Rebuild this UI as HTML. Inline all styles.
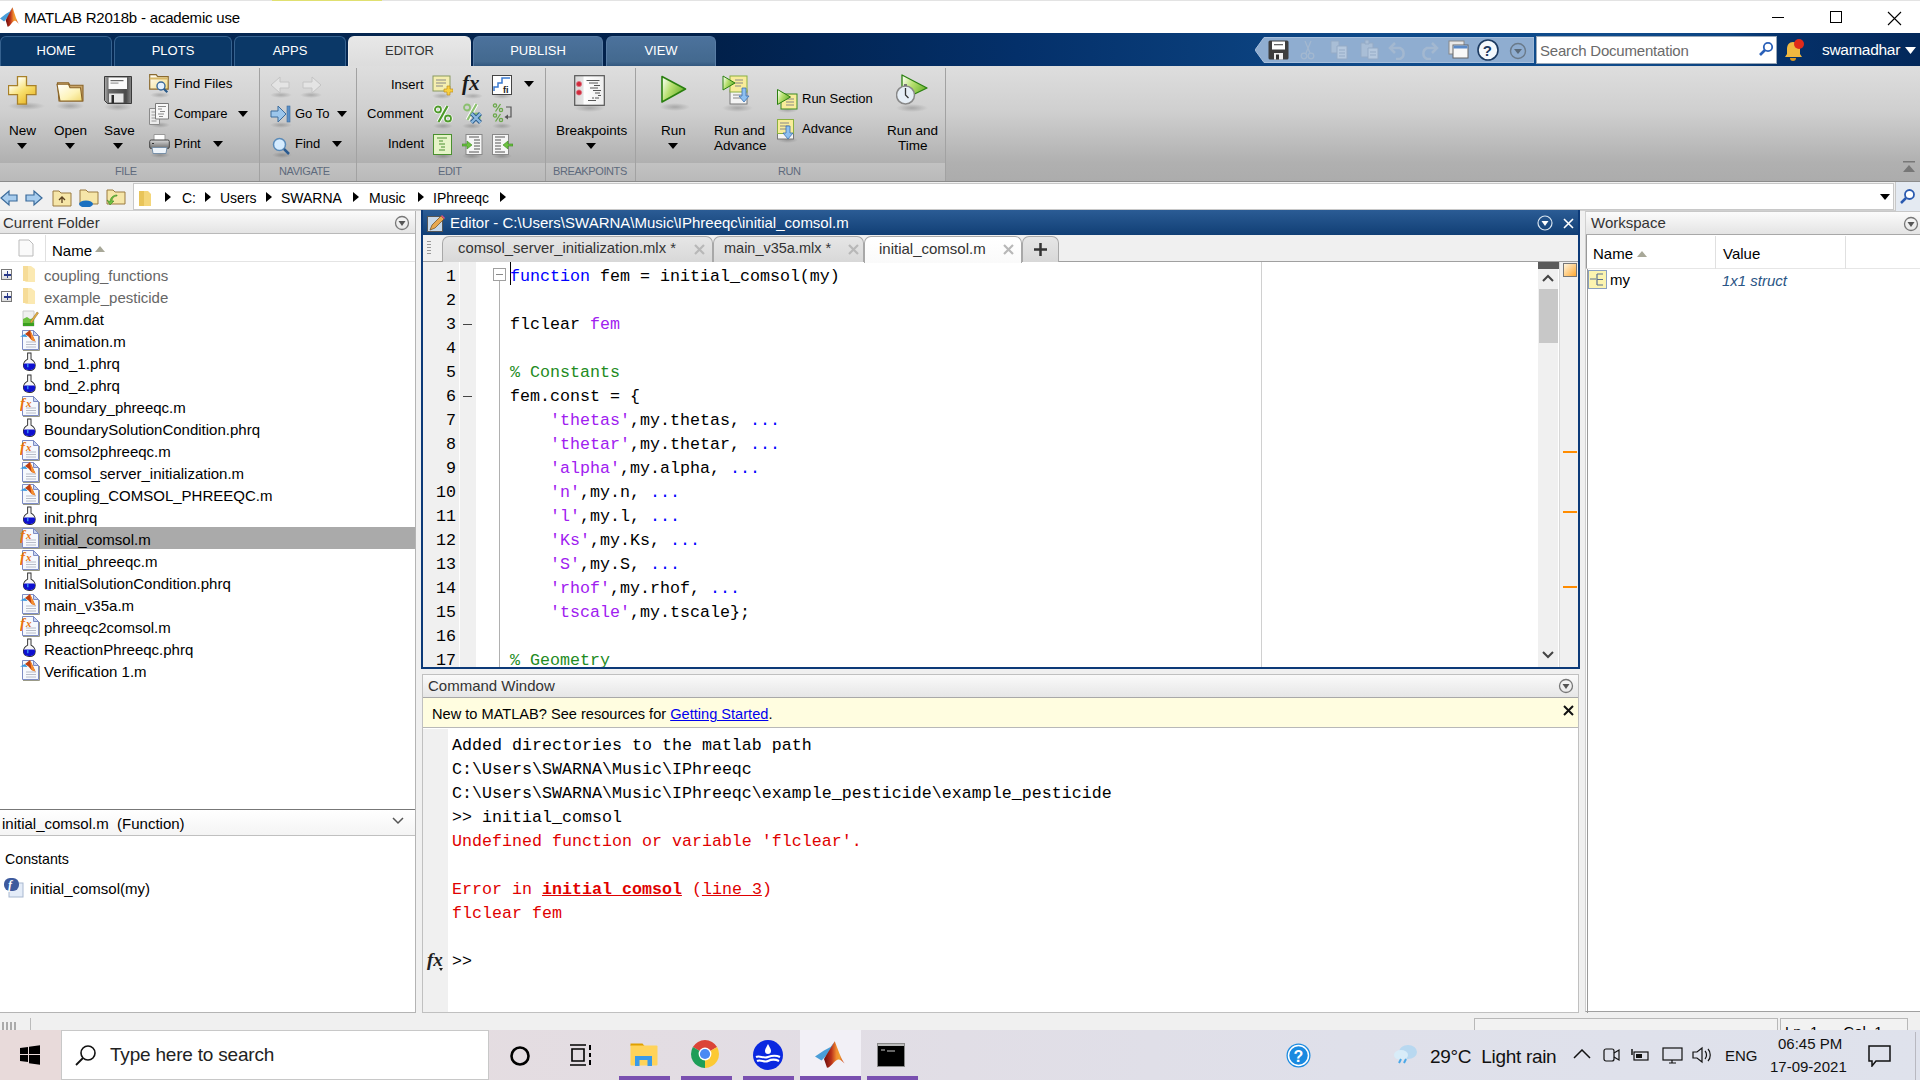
<!DOCTYPE html>
<html><head><meta charset="utf-8">
<style>
*{margin:0;padding:0;box-sizing:border-box}
html,body{width:1920px;height:1080px;overflow:hidden;background:#f0f0f0;font-family:"Liberation Sans",sans-serif;color:#000}
.a{position:absolute}
.t{position:absolute;white-space:pre;line-height:1}
.mono{font-family:"Liberation Mono",monospace}
/* title */
#title{left:0;top:0;width:1920px;height:33px;background:#fff;border-top:1px solid #e3e3e3}
/* tabbar */
#tabbar{left:0;top:33px;width:1920px;height:33px;background:linear-gradient(90deg,#062a56 0%,#04254f 20%,#01204a 37%,#04306a 53%,#093c78 62%,#0e4a8a 72%,#0f4b8b 84%,#0c4482 90%,#05316a 92.5%,#03285a 100%)}
.tab{position:absolute;top:3px;height:30px;background:#0b3867;border:1px solid #36628f;border-bottom:none;border-radius:6px 6px 0 0;color:#fff;font-size:13px;text-align:center;line-height:27px}
.tab.l{background:linear-gradient(#4c729c 0%,#43698f 85%,#33587f 100%);border-color:#587ca4}
.tab.sel{background:linear-gradient(#e8e8e8,#dcdcdc);border-color:#ececec;color:#333;height:31px}
/* ribbon */
#ribbon{left:0;top:66px;width:1920px;height:116px;background:linear-gradient(#dedede 0%,#cfcfcf 40%,#b0b0b0 84%,#acacac 100%);border-bottom:1px solid #8c8c8c}
.rl{position:absolute;font-size:13px;color:#000;white-space:pre;line-height:1}
.gl{position:absolute;top:100px;font-size:11px;letter-spacing:-0.4px;color:#5e6a7c;white-space:pre;line-height:1}
.strip{position:absolute;top:97px;height:18px;background:linear-gradient(#c2c2c2,#b9b9b9)}
.sep{position:absolute;top:2px;width:1px;height:113px;background:#a2a2a2}
.sh{position:absolute;border-radius:50%;background:radial-gradient(closest-side,rgba(0,0,0,.2),rgba(0,0,0,0))}
.dd{position:absolute;width:0;height:0;border-left:5px solid transparent;border-right:5px solid transparent;border-top:6px solid #000}
/* address */
#addr{left:0;top:182px;width:1920px;height:29px;background:#f0f0f0;border-bottom:1px solid #cfcfcf}
/* panels */
.hdr{position:absolute;height:22px;background:linear-gradient(#fbfbfb,#e4e4e4);border-bottom:1px solid #b9b9b9;font-size:15px;color:#333;line-height:22px}
.fl{position:absolute;left:44px;font-size:15px;white-space:pre;line-height:22px;height:22px}
</style></head><body>

<!-- TITLE BAR -->
<div id="title" class="a">
  <div class="a" style="left:272px;top:-1px;width:110px;height:1px;background:#e0e070"></div>
  <svg class="a" style="left:0px;top:6px" width="19" height="20" viewBox="0 0 30 27" preserveAspectRatio="none"><defs><linearGradient id="mlg2" x1="0" y1="0" x2="1" y2="0"><stop offset="0" stop-color="#6a0c0c"/><stop offset=".35" stop-color="#b8301a"/><stop offset=".6" stop-color="#f08a30"/><stop offset=".75" stop-color="#f0a030"/><stop offset="1" stop-color="#c82a1a"/></linearGradient></defs><path d="M0 15.4L9 9.5 15.5 6 19.8 0.5 13 13 6.5 19.5z" fill="#4a9ed8"/><path d="M19.8 0.3C22 6 26 18 29.6 22.6 27 20 25 18 23 18.5 19 19.5 16 26.7 12 26.7L9 18z" fill="url(#mlg2)"/></svg>
  <div class="t" style="left:24px;top:9px;font-size:15px;color:#000;letter-spacing:-0.2px">MATLAB R2018b - academic use</div>
  <div class="a" style="left:1772px;top:16px;width:12px;height:1px;background:#000"></div>
  <div class="a" style="left:1830px;top:10px;width:12px;height:12px;border:1px solid #000"></div>
  <svg class="a" style="left:1887px;top:10px" width="15" height="15" viewBox="0 0 15 15"><path d="M1 1l13 13M14 1L1 14" stroke="#000" stroke-width="1.1"/></svg>
</div>

<!-- TAB BAR -->
<div id="tabbar" class="a">
  <div class="tab" style="left:0;width:112px">HOME</div>
  <div class="tab" style="left:114px;width:118px">PLOTS</div>
  <div class="tab" style="left:234px;width:112px">APPS</div>
  <div class="tab sel" style="left:348px;width:123px">EDITOR</div>
  <div class="tab l" style="left:473px;width:130px">PUBLISH</div>
  <div class="tab l" style="left:606px;width:110px">VIEW</div>
  <svg class="a" style="left:1255px;top:4px" width="279" height="26" viewBox="0 0 279 26"><path d="M9 0.5h270v25H9L0 13z" fill="#8fadd0" stroke="#a9c0dc" stroke-width="1"/></svg>
  <svg class="a" style="left:1268px;top:7px" width="21" height="20" viewBox="0 0 21 20"><rect x="0.5" y="0.5" width="20" height="19" rx="1.5" fill="#3e3e3e"/><rect x="4" y="1.5" width="13" height="8" fill="#fff"/><rect x="6" y="4" width="9" height="1.3" fill="#666"/><rect x="6" y="13" width="9" height="6.5" fill="#f0f0f0"/><rect x="8" y="14.5" width="3" height="5" fill="#333"/></svg>
  <svg class="a" style="left:1300px;top:7px" width="16" height="20" viewBox="0 0 16 20"><path d="M5 1l5 12M11 1L6 13" stroke="#a3b8d0" stroke-width="1.3"/><circle cx="4" cy="16" r="2.8" fill="none" stroke="#a3b8d0" stroke-width="1.3"/><circle cx="11" cy="16" r="2.8" fill="none" stroke="#a3b8d0" stroke-width="1.3"/></svg>
  <svg class="a" style="left:1330px;top:7px" width="18" height="20" viewBox="0 0 18 20"><path d="M1 1h8v12H1z" fill="#a9bed6" stroke="#95abc6"/><path d="M7 6h10v13H7z" fill="#b5c8de" stroke="#95abc6"/><path d="M9 10h6M9 13h6M9 16h6" stroke="#95abc6"/></svg>
  <svg class="a" style="left:1360px;top:6px" width="19" height="21" viewBox="0 0 19 21"><path d="M1 4h12v14H1z" fill="#a9bed6" stroke="#95abc6"/><path d="M5 1h4v4H5z" fill="#a9bed6" stroke="#95abc6"/><path d="M8 9h10v11H8z" fill="#b5c8de" stroke="#95abc6"/><path d="M10 13h6M10 16h6" stroke="#95abc6"/></svg>
  <svg class="a" style="left:1388px;top:8px" width="21" height="19" viewBox="0 0 21 19"><path d="M7 2L2 7l5 5" fill="none" stroke="#a3b8d0" stroke-width="2.5"/><path d="M3 7h9a6 6 0 0 1 0 11H8" fill="none" stroke="#a3b8d0" stroke-width="2.5"/></svg>
  <svg class="a" style="left:1418px;top:8px" width="21" height="19" viewBox="0 0 21 19"><path d="M14 2l5 5-5 5" fill="none" stroke="#a3b8d0" stroke-width="2.5"/><path d="M18 7H9a6 6 0 0 0 0 11h4" fill="none" stroke="#a3b8d0" stroke-width="2.5"/></svg>
  <svg class="a" style="left:1448px;top:7px" width="21" height="19" viewBox="0 0 21 19"><rect x="1" y="1" width="15" height="13" fill="#e8e8e8" stroke="#888"/><rect x="5" y="5" width="15" height="13" fill="#f8f8f8" stroke="#666"/><rect x="5.5" y="5.5" width="14" height="3" fill="#5a8ac8"/></svg>
  <svg class="a" style="left:1477px;top:6px" width="22" height="22" viewBox="0 0 22 22"><circle cx="11" cy="11" r="10" fill="#f4f8fc" stroke="#1c3a60" stroke-width="1.6"/><text x="5.8" y="17" font-family="Liberation Sans" font-weight="bold" font-size="15" fill="#1c3a60">?</text></svg>
  <svg class="a" style="left:1509px;top:9px" width="18" height="18" viewBox="0 0 18 18"><circle cx="9" cy="9" r="7.5" fill="none" stroke="#6a7a8a" stroke-width="1.4"/><path d="M5 7h8l-4 5z" fill="#5a6a7a"/></svg>
  <div class="a" style="left:1536px;top:3px;width:241px;height:28px;background:#fff;border:1px solid #9aa8b8"></div>
  <div class="t" style="left:1540px;top:10px;font-size:15px;color:#6a6a6a;letter-spacing:-0.2px">Search Documentation</div>
  <svg class="a" style="left:1758px;top:8px" width="16" height="16" viewBox="0 0 16 16"><circle cx="10" cy="6" r="4.2" fill="#fff" stroke="#2a60b8" stroke-width="1.8"/><path d="M7 9l-5 5" stroke="#2a60b8" stroke-width="2.6"/></svg>
  <svg class="a" style="left:1784px;top:5px" width="22" height="24" viewBox="0 0 22 24"><path d="M9 4c-4 0-6 3-6 7v5l-2 3h17l-2-3v-5c0-4-3-7-7-7z" fill="#f0b840"/><path d="M6 20a3 3 0 0 0 6 0z" fill="#d89820"/><circle cx="15" cy="6" r="5" fill="#e02a1a"/></svg>
  <div class="t" style="left:1822px;top:9px;font-size:15.5px;color:#fff;letter-spacing:-0.3px">swarnadhar</div>
  <svg class="a" style="left:1905px;top:14px" width="11" height="7"><path d="M0 0h11L5.5 7z" fill="#fff"/></svg>
</div>

<!-- RIBBON -->
<div id="ribbon" class="a">
  <div class="sh" style="left:8px;top:36px;width:37px;height:8px"></div><div class="sh" style="left:56px;top:36px;width:28px;height:8px"></div><div class="sh" style="left:104px;top:37px;width:28px;height:8px"></div><div class="sh" style="left:150px;top:26px;width:20px;height:6px"></div><div class="sh" style="left:150px;top:56px;width:20px;height:6px"></div><div class="sh" style="left:150px;top:86px;width:20px;height:6px"></div><div class="sh" style="left:270px;top:26px;width:22px;height:6px"></div><div class="sh" style="left:300px;top:26px;width:22px;height:6px"></div><div class="sh" style="left:270px;top:56px;width:22px;height:6px"></div><div class="sh" style="left:272px;top:86px;width:20px;height:6px"></div><div class="sh" style="left:432px;top:27px;width:20px;height:6px"></div><div class="sh" style="left:463px;top:27px;width:20px;height:6px"></div><div class="sh" style="left:492px;top:27px;width:20px;height:6px"></div><div class="sh" style="left:433px;top:57px;width:20px;height:6px"></div><div class="sh" style="left:462px;top:57px;width:20px;height:6px"></div><div class="sh" style="left:492px;top:57px;width:20px;height:6px"></div><div class="sh" style="left:433px;top:87px;width:20px;height:6px"></div><div class="sh" style="left:462px;top:87px;width:20px;height:6px"></div><div class="sh" style="left:492px;top:87px;width:20px;height:6px"></div><div class="sh" style="left:574px;top:38px;width:31px;height:8px"></div><div class="sh" style="left:660px;top:37px;width:30px;height:8px"></div><div class="sh" style="left:722px;top:38px;width:31px;height:8px"></div><div class="sh" style="left:777px;top:41px;width:21px;height:6px"></div><div class="sh" style="left:777px;top:71px;width:21px;height:6px"></div><div class="sh" style="left:896px;top:38px;width:32px;height:8px"></div>
  <!-- FILE -->
  <svg class="a" style="left:8px;top:10px" width="29" height="29" viewBox="0 0 29 29"><defs><linearGradient id="gy" x1="0.25" y1="0.15" x2="0.85" y2="0.95"><stop offset="0" stop-color="#fffef0"/><stop offset=".45" stop-color="#f8e070"/><stop offset="1" stop-color="#e8b420"/></linearGradient></defs><path d="M9.5 0.7h9v9h9.5v9h-9.5v9.5h-9v-9.5h-9v-9h9z" fill="url(#gy)" stroke="#a88028" stroke-width="1.3"/></svg>
  <svg class="a" style="left:56px;top:16px" width="28" height="20" viewBox="0 0 28 20"><defs><linearGradient id="gf" x1="0" y1="0" x2="1" y2="1"><stop offset="0" stop-color="#ffffff"/><stop offset=".6" stop-color="#fdf3b8"/><stop offset="1" stop-color="#f0d870"/></linearGradient></defs><path d="M1.5 0.7h11l1.5 2.5h13v15.8H3z" fill="#c8a468" stroke="#8a6428" stroke-width="1.1"/><path d="M1 2.2h11.5l1.5 3.6h10.5l1.8 13.2H4z" fill="url(#gf)" stroke="#8a6428" stroke-width="1.1"/></svg>
  <svg class="a" style="left:104px;top:10px" width="28" height="28" viewBox="0 0 28 28"><defs><linearGradient id="gs" x1="0" y1="0" x2="1" y2="0"><stop offset="0" stop-color="#b0b0b0"/><stop offset=".15" stop-color="#6a6a6a"/><stop offset=".8" stop-color="#4a4a4a"/><stop offset="1" stop-color="#8a8a8a"/></linearGradient></defs><path d="M0.5 0.5h27v27H3.5l-3-3z" fill="url(#gs)" stroke="#3a3a3a"/><rect x="4.5" y="1.5" width="18.5" height="11.5" fill="#fafafa"/><rect x="6.5" y="4" width="13" height="1.2" fill="#666"/><rect x="6.5" y="6.5" width="8" height="1.2" fill="#999"/><rect x="5" y="17.5" width="14.5" height="9" fill="#e6e6e6"/><rect x="7.5" y="19" width="2.5" height="8" fill="#2a2a2a"/></svg>
  <div class="rl" style="left:9px;top:58px;font-size:13.5px">New</div>
  <div class="rl" style="left:54px;top:58px;font-size:13.5px">Open</div>
  <div class="rl" style="left:104px;top:58px;font-size:13.5px">Save</div>
  <div class="dd" style="left:17px;top:77px"></div>
  <div class="dd" style="left:65px;top:77px"></div>
  <div class="dd" style="left:113px;top:77px"></div>
  <svg class="a" style="left:149px;top:8px" width="21" height="20" viewBox="0 0 21 20"><defs><linearGradient id="gff" x1="0" y1="0" x2="1" y2="1"><stop offset="0" stop-color="#fff"/><stop offset="1" stop-color="#f4dc80"/></linearGradient></defs><path d="M0.7 0.7h6.5l1.5 2h10.5v12.5H0.7z" fill="url(#gff)" stroke="#8a6a30" stroke-width="1.2"/><path d="M0.7 3.5h18v2H0.7z" fill="#d8b868"/><circle cx="12" cy="12" r="4" fill="#e4f2ff" stroke="#3a6a9a" stroke-width="1.4"/><path d="M14.8 14.8l3.5 3.5" stroke="#2a5a8a" stroke-width="2.2"/></svg>
  <div class="rl" style="left:174px;top:11px;font-size:13.5px">Find Files</div>
  <svg class="a" style="left:149px;top:37px" width="21" height="22" viewBox="0 0 21 22"><path d="M0.5 5.5h10v16h-10z" fill="#ececec" stroke="#8a8a8a"/><path d="M2.5 9h6M2.5 12h4M2.5 15h6M2.5 18h5" stroke="#9a9a9a"/><path d="M6.5 0.5h13v15.5h-13z" fill="#f8f8f8" stroke="#7a7a7a"/><path d="M9 3.5h8M9 6h4M11 8.5h5M9 11h6M10 13.5h4" stroke="#8a8a8a"/></svg>
  <div class="rl" style="left:174px;top:41px">Compare</div>
  <div class="dd" style="left:238px;top:45px"></div>
  <svg class="a" style="left:149px;top:68px" width="21" height="20" viewBox="0 0 21 20"><defs><linearGradient id="gpr" x1="0" y1="0" x2="0" y2="1"><stop offset="0" stop-color="#d8d8d8"/><stop offset="1" stop-color="#6a6a6a"/></linearGradient></defs><path d="M5 0.5h11v6H5z" fill="#fff" stroke="#999"/><rect x="0.7" y="6" width="19.6" height="8.5" rx="1.5" fill="url(#gpr)" stroke="#444"/><path d="M3 9.5h2" stroke="#333"/><path d="M3 13.5h15l-1 6H4z" fill="#eef4fa" stroke="#7890a8"/></svg>
  <div class="rl" style="left:174px;top:71px">Print</div>
  <div class="dd" style="left:213px;top:75px"></div>
  <div class="strip" style="left:0;width:259px"></div>
  <div class="gl" style="left:115px">FILE</div>
  <div class="sep" style="left:259px"></div>
  <!-- NAVIGATE -->
  <svg class="a" style="left:270px;top:9px" width="52" height="20" viewBox="0 0 52 20"><path d="M1 10l9-8v5h9v6h-9v5z" fill="#e4e4e4" stroke="#c4c4c4"/><path d="M51 10l-9-8v5h-9v6h9v5z" fill="#e4e4e4" stroke="#c4c4c4"/></svg>
  <svg class="a" style="left:270px;top:39px" width="21" height="18" viewBox="0 0 21 18"><path d="M1 6h7V1l8 8-8 8v-5H1z" fill="#9cc6ec" stroke="#3d6c9c"/><rect x="17" y="1" width="3" height="16" fill="#5b8fc6" stroke="#3d6c9c" stroke-width=".6"/></svg>
  <div class="rl" style="left:295px;top:41px">Go To</div>
  <div class="dd" style="left:337px;top:45px"></div>
  <svg class="a" style="left:272px;top:71px" width="19" height="18" viewBox="0 0 19 18"><circle cx="7.5" cy="7.5" r="6" fill="#d6ecff" stroke="#5a8ab8" stroke-width="1.5"/><path d="M12 12l5 5" stroke="#2a5a90" stroke-width="2.5"/></svg>
  <div class="rl" style="left:295px;top:71px">Find</div>
  <div class="dd" style="left:332px;top:75px"></div>
  <div class="strip" style="left:260px;width:96px"></div>
  <div class="gl" style="left:279px">NAVIGATE</div>
  <div class="sep" style="left:356px"></div>
  <!-- EDIT -->
  <div class="rl" style="left:391px;top:12px">Insert</div>
  <div class="rl" style="left:367px;top:41px">Comment</div>
  <div class="rl" style="left:388px;top:71px">Indent</div>
  <svg class="a" style="left:432px;top:9px" width="21" height="21" viewBox="0 0 21 21"><rect x="1" y="1" width="17" height="15" fill="#f4eeb0" stroke="#8a9a60"/><path d="M4 5h10M4 8h10M4 11h7" stroke="#888"/><path d="M15 11h3v3h3v3h-3v3h-3v-3h-3v-3h3z" fill="#f8d040" stroke="#c09020" stroke-width=".7"/></svg>
  <div class="t" style="left:462px;top:7px;font-family:'Liberation Serif',serif;font-style:italic;font-weight:bold;font-size:21px;color:#1a1a1a">fx</div>
  <svg class="a" style="left:492px;top:9px" width="21" height="21" viewBox="0 0 21 21"><rect x="0.5" y="0.5" width="19" height="19" fill="#fff" stroke="#444"/><path d="M2 16v-4h4V8h4V3h8" fill="none" stroke="#3a7ad0" stroke-width="1.5"/><text x="11" y="18" font-size="9" font-family="Liberation Sans" font-weight="bold" fill="#222">fi</text></svg>
  <div class="dd" style="left:524px;top:15px"></div>
  <svg class="a" style="left:433px;top:38px" width="20" height="20" viewBox="0 0 20 20"><path d="M14.5 2L5.5 18" stroke="#fff" stroke-width="4"/><circle cx="5" cy="5.5" r="3" fill="none" stroke="#fff" stroke-width="3.5"/><circle cx="15" cy="14.5" r="3" fill="none" stroke="#fff" stroke-width="3.5"/><path d="M14.5 2L5.5 18" stroke="#4e9a2a" stroke-width="2.2"/><circle cx="5" cy="5.5" r="3" fill="none" stroke="#4e9a2a" stroke-width="1.8"/><circle cx="15" cy="14.5" r="3" fill="none" stroke="#4e9a2a" stroke-width="1.8"/></svg>
  <svg class="a" style="left:462px;top:37px" width="21" height="21" viewBox="0 0 21 21"><path d="M14.5 1L5.5 17" stroke="#fff" stroke-width="4"/><path d="M14.5 1L5.5 17" stroke="#8cc070" stroke-width="2.2"/><circle cx="5" cy="4.5" r="3" fill="none" stroke="#8cc070" stroke-width="1.8"/><circle cx="15" cy="13.5" r="3" fill="none" stroke="#8cc070" stroke-width="1.8"/><path d="M9.5 10.5l9 9M18.5 10.5l-9 9" stroke="#2a5a8a" stroke-width="4.2"/><path d="M9.5 10.5l9 9M18.5 10.5l-9 9" stroke="#8ab8e0" stroke-width="2.4"/></svg>
  <svg class="a" style="left:492px;top:37px" width="21" height="21" viewBox="0 0 21 21"><g stroke="#6aa848" fill="none" stroke-width="1.3"><circle cx="3" cy="2.5" r="1.6"/><circle cx="9" cy="7" r="1.6"/><path d="M8.5 1L3.5 8.5"/><circle cx="3" cy="12.5" r="1.6"/><circle cx="9" cy="17" r="1.6"/><path d="M8.5 11L3.5 18.5"/></g><path d="M14 4h5v10h-4" fill="none" stroke="#555" stroke-width="1.2"/><path d="M16 11.5l-3.5 2.5 3.5 2.5z" fill="#555"/></svg>
  <svg class="a" style="left:433px;top:68px" width="19" height="21" viewBox="0 0 19 21"><rect x="0.5" y="0.5" width="18" height="20" fill="#e6f4c8" stroke="#4a9030"/><path d="M4 4h10M6 7h4M6 10h6M8 13h4M6 16h6" stroke="#4a9030" stroke-width="1.2"/></svg>
  <svg class="a" style="left:462px;top:68px" width="21" height="21" viewBox="0 0 21 21"><rect x="4" y="0.5" width="16" height="20" fill="#f6f6f6" stroke="#888"/><path d="M7 3h10M12 6h6M12 9h6M12 12h6M12 15h6M7 18h10" stroke="#555"/><path d="M0 10h5V7l5 4-5 4v-3H0z" fill="#6cc040" stroke="#3a8a20" stroke-width=".6"/></svg>
  <svg class="a" style="left:492px;top:68px" width="21" height="21" viewBox="0 0 21 21"><rect x="0.5" y="0.5" width="16" height="20" fill="#f6f6f6" stroke="#888"/><path d="M3 3h10M3 6h6M3 9h6M3 12h6M3 15h6M3 18h10" stroke="#555"/><path d="M21 10h-5V7l-5 4 5 4v-3h5z" fill="#6cc040" stroke="#3a8a20" stroke-width=".6"/></svg>
  <div class="strip" style="left:357px;width:188px"></div>
  <div class="gl" style="left:438px">EDIT</div>
  <div class="sep" style="left:545px"></div>
  <!-- BREAKPOINTS -->
  <svg class="a" style="left:574px;top:9px" width="31" height="31" viewBox="0 0 31 31"><defs><linearGradient id="gbp" x1="0" y1="0" x2="1" y2="0"><stop offset="0" stop-color="#d8d8d8"/><stop offset=".28" stop-color="#e4e4e4"/><stop offset=".32" stop-color="#ffffff"/><stop offset="1" stop-color="#eeeeee"/></linearGradient></defs><rect x="0.7" y="0.7" width="29.6" height="29.6" fill="url(#gbp)" stroke="#555" stroke-width="1.2"/><circle cx="5" cy="9" r="2.6" fill="#d02a3a" stroke="#e07080" stroke-width=".8"/><circle cx="5" cy="17.5" r="2.6" fill="#d02a3a" stroke="#e07080" stroke-width=".8"/><path d="M12.5 5.5h13M15 8h9M20 10.5h6M16 13h8M19 15.5h8M21 18h5M24 20.5h3M18 23h2M21 23h4M14 25.5h8" stroke="#444" stroke-width=".9"/></svg>
  <div class="rl" style="left:556px;top:58px;font-size:13.5px">Breakpoints</div>
  <div class="dd" style="left:586px;top:77px"></div>
  <div class="strip" style="left:546px;width:89px"></div>
  <div class="gl" style="left:553px">BREAKPOINTS</div>
  <div class="sep" style="left:635px"></div>
  <!-- RUN -->
  <svg class="a" style="left:660px;top:9px" width="28" height="30" viewBox="0 0 28 30"><defs><linearGradient id="grun" x1="0" y1="0.3" x2="1" y2="0.8"><stop offset="0" stop-color="#f0fae0"/><stop offset=".35" stop-color="#b8e070"/><stop offset="1" stop-color="#5aa820"/></linearGradient></defs><path d="M2 1.5l23.5 12.5L2 27z" fill="url(#grun)" stroke="#2a8010" stroke-width="1.6" stroke-linejoin="round"/></svg>
  <div class="rl" style="left:661px;top:58px;font-size:13.5px">Run</div>
  <div class="dd" style="left:668px;top:77px"></div>
  <svg class="a" style="left:722px;top:9px" width="31" height="31" viewBox="0 0 31 31"><rect x="8" y="15" width="17" height="14" fill="#f4f4f4" stroke="#777"/><rect x="8" y="1" width="17" height="16" fill="#f8ec9a" stroke="#8ab040"/><path d="M13 5h8M13 8h8M13 11h6M11 20h10M11 23h8" stroke="#888"/><path d="M1 1l12 7L1 15z" fill="url(#grun)" stroke="#2a8010" stroke-linejoin="round"/><path d="M24 13v8h3l-5 6-5-6h3v-8z" fill="#8ec0f0" stroke="#3a70b0" stroke-width=".8"/></svg>
  <div class="rl" style="left:714px;top:58px;font-size:13.5px">Run and</div>
  <div class="rl" style="left:714px;top:73px;font-size:13.5px">Advance</div>
  <svg class="a" style="left:777px;top:23px" width="21" height="21" viewBox="0 0 21 21"><rect x="4" y="5" width="16" height="15" fill="#f8ec9a" stroke="#3a8a20"/><path d="M9 10h8M9 13h8M9 16h8" stroke="#888"/><path d="M0.5 0.5l13 7.5-13 7.5z" fill="url(#grun)" stroke="#2a8010" stroke-linejoin="round"/></svg>
  <div class="rl" style="left:802px;top:26px">Run Section</div>
  <svg class="a" style="left:777px;top:53px" width="21" height="21" viewBox="0 0 21 21"><rect x="0.5" y="12" width="16" height="8" fill="#f4f4f4" stroke="#777"/><rect x="0.5" y="0.5" width="16" height="14" fill="#f8ec9a" stroke="#8ab040"/><path d="M3 4h9M3 7h9M3 10h6" stroke="#888"/><path d="M13 7v7h3l-5 6-5-6h3V7z" fill="#8ec0f0" stroke="#3a70b0" stroke-width=".8"/></svg>
  <div class="rl" style="left:802px;top:56px">Advance</div>
  <svg class="a" style="left:896px;top:8px" width="32" height="32" viewBox="0 0 32 32"><path d="M6 1l25 13L6 26z" fill="url(#grun)" stroke="#2a8010" stroke-linejoin="round" stroke-width="1.3"/><circle cx="9.5" cy="21" r="9" fill="#e6eef6" stroke="#888" stroke-width="1.5"/><path d="M9.5 14v7l3 3" stroke="#333" stroke-width="1.3" fill="none"/><rect x="8" y="10" width="3" height="2" fill="#777"/></svg>
  <div class="rl" style="left:887px;top:58px;font-size:13.5px">Run and</div>
  <div class="rl" style="left:898px;top:73px;font-size:13.5px">Time</div>
  <div class="strip" style="left:636px;width:309px"></div>
  <div class="gl" style="left:778px">RUN</div>
  <div class="sep" style="left:945px"></div>
  <!-- collapse arrow -->
  <svg class="a" style="left:1902px;top:94px" width="14" height="14" viewBox="0 0 14 14"><rect x="1" y="1" width="12" height="1.5" fill="#777"/><path d="M1 12l6-7 6 7z" fill="#777"/></svg>
</div>

<!-- ADDRESS BAR -->
<div id="addr" class="a">
  <svg class="a" style="left:0px;top:7px" width="130" height="18" viewBox="0 0 130 18">
    <path d="M1 9l8-7v4h8v6H9v4z" fill="#a8cdee" stroke="#3a6a9a" stroke-width="1.2"/>
    <path d="M42 9l-8-7v4h-8v6h8v4z" fill="#a8cdee" stroke="#3a6a9a" stroke-width="1.2"/>
    <path d="M53 2h6l2 2h10v13H53z" fill="#f6e6a8" stroke="#9a7a40"/><path d="M62 14V9M59 11l3-3 3 3" stroke="#5a4020" fill="none" stroke-width="1.3"/>
    <path d="M80 1h6l2 2h10v12H80z" fill="#f6e6a8" stroke="#9a7a40"/><ellipse cx="86" cy="15" rx="7" ry="3.5" fill="#1a70c0"/>
    <path d="M107 1h6l2 2h10v12h-18z" fill="#f6e6a8" stroke="#9a7a40"/><path d="M117 6c-4 0-7 3-7 7l-3-2 3 5 4-4h-2c0-3 2-5 5-5z" fill="#70c040" stroke="#3a8a20" stroke-width=".6"/>
  </svg>
  <div class="a" style="left:133px;top:1px;width:1761px;height:27px;background:#fff;border:1px solid #c8c8c8"></div>
  <svg class="a" style="left:138px;top:8px" width="14" height="17" viewBox="0 0 14 17"><path d="M1 1h9l3 3v12H3l-2-1z" fill="#f4d67a"/><path d="M1 1h5v15H1z" fill="#e8c45a"/></svg>
  <div class="t" style="left:182px;top:190px;font-size:14px"></div>
  <svg class="a" style="left:165px;top:10px" width="345" height="10" viewBox="0 0 345 10">
    <path d="M0 0l6 5-6 5z" M="" fill="#000"/><path d="M40 0l6 5-6 5z" fill="#000"/><path d="M101 0l6 5-6 5z" fill="#000"/><path d="M188 0l6 5-6 5z" fill="#000"/><path d="M253 0l6 5-6 5z" fill="#000"/><path d="M335 0l6 5-6 5z" fill="#000"/>
  </svg>
  <div class="t" style="left:182px;top:9px;font-size:14px">C:</div>
  <div class="t" style="left:220px;top:9px;font-size:14px">Users</div>
  <div class="t" style="left:281px;top:9px;font-size:14px">SWARNA</div>
  <div class="t" style="left:369px;top:9px;font-size:14px">Music</div>
  <div class="t" style="left:433px;top:9px;font-size:14px">IPhreeqc</div>
  <div class="dd" style="left:1880px;top:12px"></div>
  <div class="a" style="left:1895px;top:0px;width:25px;height:29px;background:#e4eaf2;border-left:1px solid #c8c8c8"></div>
  <svg class="a" style="left:1899px;top:6px" width="17" height="17" viewBox="0 0 17 17"><circle cx="10.5" cy="6.5" r="4.5" fill="#fff" stroke="#2a5ab0" stroke-width="1.8"/><path d="M7 10l-5 5" stroke="#2a5ab0" stroke-width="2.5"/></svg>
</div>

<!-- LEFT PANEL -->
<div class="a" style="left:0;top:211px;width:416px;height:802px;background:#fff;border-right:1px solid #b4b4b4;border-bottom:1px solid #b4b4b4">
  <div class="hdr" style="left:0;top:0;width:415px;height:23px;padding-left:3px;line-height:24px">Current Folder</div>
  <svg class="a" style="left:394px;top:4px" width="16" height="16" viewBox="0 0 16 16"><circle cx="8" cy="8" r="6.5" fill="none" stroke="#777" stroke-width="1.3"/><path d="M4.5 6h7L8 11z" fill="#555"/></svg>
  <div class="a" style="left:0;top:23px;width:415px;height:28px;background:#fff;border-bottom:1px solid #e4e4e4"></div>
  <div class="a" style="left:45px;top:24px;width:1px;height:27px;background:#e0e0e0"></div>
  <svg class="a" style="left:18px;top:28px" width="16" height="18" viewBox="0 0 16 18"><path d="M1 1h10l4 4v12H1z" fill="#fafafa" stroke="#bbb"/></svg>
  <div class="t" style="left:52px;top:32px;font-size:15px">Name</div>
  <svg class="a" style="left:95px;top:35px" width="10" height="6"><path d="M0 6l5-6 5 6z" fill="#a8a898"/></svg>
  <div class="a" style="left:1px;top:58px;width:11px;height:11px;border:1px solid #777;background:linear-gradient(#fff,#ddd)"></div><div class="a" style="left:4px;top:63px;width:7px;height:1.5px;background:#2a3a8a"></div><div class="a" style="left:6.5px;top:60px;width:1.5px;height:7px;background:#2a3a8a"></div>
  <svg class="a" style="left:22px;top:54px" width="14" height="18" viewBox="0 0 14 18"><path d="M1 1h8l4 3v13H4l-3-2z" fill="#fbe9b2"/><path d="M1 1h5v15H1z" fill="#f6dc98"/></svg>
  <div class="t" style="left:44px;top:57px;font-size:15px;color:#666">coupling_functions</div>
  <div class="a" style="left:1px;top:80px;width:11px;height:11px;border:1px solid #777;background:linear-gradient(#fff,#ddd)"></div><div class="a" style="left:4px;top:85px;width:7px;height:1.5px;background:#2a3a8a"></div><div class="a" style="left:6.5px;top:82px;width:1.5px;height:7px;background:#2a3a8a"></div>
  <svg class="a" style="left:22px;top:76px" width="14" height="18" viewBox="0 0 14 18"><path d="M1 1h8l4 3v13H4l-3-2z" fill="#fbe9b2"/><path d="M1 1h5v15H1z" fill="#f6dc98"/></svg>
  <div class="t" style="left:44px;top:79px;font-size:15px;color:#666">example_pesticide</div>
  <svg class="a" style="left:22px;top:99px" width="17" height="17" viewBox="0 0 17 17"><path d="M1 1h11v15H1z" fill="#f0f0f0" stroke="#ccc"/><path d="M1 9l4-2 3 2 4-1v8H1z" fill="#6cc040"/><path d="M1 13h11v3H1z" fill="#3aa020"/><path d="M8 12l7-10 1.5 1-7 10z" fill="#e8b040" stroke="#8a6a30" stroke-width=".5"/></svg>
  <div class="t" style="left:44px;top:101px;font-size:15px;color:#000">Amm.dat</div>
  <svg class="a" style="left:20px;top:119px" width="20" height="21" viewBox="0 0 20 21"><path d="M2.5 0.5h11l5 5v14h-16z" fill="#f6f9fd" stroke="#7d8cc4"/><path d="M13.5 0.5v5h5z" fill="#c8d4f0" stroke="#7d8cc4" stroke-linejoin="round"/><path d="M19.5 6v14.5H3" fill="none" stroke="#9a9a88"/><path d="M6 12h10M6 14.5h10M6 17h10" stroke="#b8bcc8"/><path d="M0 6.5l5-2.5 2.5 3z" fill="#3a9ae0"/><path d="M5 4l5-4 5.5 11.5-4-1.5-3-3.5z" fill="#c04010"/><path d="M10 0l5.5 11.5-4-1.5z" fill="#f59030"/></svg>
  <div class="t" style="left:44px;top:123px;font-size:15px;color:#000">animation.m</div>
  <svg class="a" style="left:23px;top:141px" width="13.5" height="20" viewBox="0 0 16 21" preserveAspectRatio="none"><path d="M5.5 1h4v6.5c3 1.5 5 3.5 5 6.5 0 3.5-3 5.5-7 5.5s-7-2-7-5.5c0-3 2-5 5-6.5z" fill="#f6f6f6" stroke="#2a2a2a" stroke-width="1.1"/><path d="M1.6 12.2h11.8c.6.6 1 1.3 1 2.1 0 3-3 4.9-6.9 4.9s-6.9-1.9-6.9-4.9c0-.8.4-1.5 1-2.1z" fill="#0e10d0"/><rect x="5" y="12.5" width="1.4" height="3.5" fill="#40a8f8"/></svg>
  <div class="t" style="left:44px;top:145px;font-size:15px;color:#000">bnd_1.phrq</div>
  <svg class="a" style="left:23px;top:163px" width="13.5" height="20" viewBox="0 0 16 21" preserveAspectRatio="none"><path d="M5.5 1h4v6.5c3 1.5 5 3.5 5 6.5 0 3.5-3 5.5-7 5.5s-7-2-7-5.5c0-3 2-5 5-6.5z" fill="#f6f6f6" stroke="#2a2a2a" stroke-width="1.1"/><path d="M1.6 12.2h11.8c.6.6 1 1.3 1 2.1 0 3-3 4.9-6.9 4.9s-6.9-1.9-6.9-4.9c0-.8.4-1.5 1-2.1z" fill="#0e10d0"/><rect x="5" y="12.5" width="1.4" height="3.5" fill="#40a8f8"/></svg>
  <div class="t" style="left:44px;top:167px;font-size:15px;color:#000">bnd_2.phrq</div>
  <svg class="a" style="left:20px;top:185px" width="20" height="21" viewBox="0 0 20 21"><path d="M2.5 0.5h11l5 5v14h-16z" fill="#f6f9fd" stroke="#7d8cc4"/><path d="M13.5 0.5v5h5z" fill="#c8d4f0" stroke="#7d8cc4" stroke-linejoin="round"/><path d="M19.5 6v14.5H3" fill="none" stroke="#9a9a88"/><path d="M6 12h10M6 14.5h10M6 17h10" stroke="#b8bcc8"/><text x="0" y="12" font-family="Liberation Serif" font-style="italic" font-weight="bold" font-size="15" fill="#e8740e">f</text><text x="6" y="11" font-family="Liberation Serif" font-style="italic" font-weight="bold" font-size="11" fill="#e8740e">x</text></svg>
  <div class="t" style="left:44px;top:189px;font-size:15px;color:#000">boundary_phreeqc.m</div>
  <svg class="a" style="left:23px;top:207px" width="13.5" height="20" viewBox="0 0 16 21" preserveAspectRatio="none"><path d="M5.5 1h4v6.5c3 1.5 5 3.5 5 6.5 0 3.5-3 5.5-7 5.5s-7-2-7-5.5c0-3 2-5 5-6.5z" fill="#f6f6f6" stroke="#2a2a2a" stroke-width="1.1"/><path d="M1.6 12.2h11.8c.6.6 1 1.3 1 2.1 0 3-3 4.9-6.9 4.9s-6.9-1.9-6.9-4.9c0-.8.4-1.5 1-2.1z" fill="#0e10d0"/><rect x="5" y="12.5" width="1.4" height="3.5" fill="#40a8f8"/></svg>
  <div class="t" style="left:44px;top:211px;font-size:15px;color:#000">BoundarySolutionCondition.phrq</div>
  <svg class="a" style="left:20px;top:229px" width="20" height="21" viewBox="0 0 20 21"><path d="M2.5 0.5h11l5 5v14h-16z" fill="#f6f9fd" stroke="#7d8cc4"/><path d="M13.5 0.5v5h5z" fill="#c8d4f0" stroke="#7d8cc4" stroke-linejoin="round"/><path d="M19.5 6v14.5H3" fill="none" stroke="#9a9a88"/><path d="M6 12h10M6 14.5h10M6 17h10" stroke="#b8bcc8"/><text x="0" y="12" font-family="Liberation Serif" font-style="italic" font-weight="bold" font-size="15" fill="#e8740e">f</text><text x="6" y="11" font-family="Liberation Serif" font-style="italic" font-weight="bold" font-size="11" fill="#e8740e">x</text></svg>
  <div class="t" style="left:44px;top:233px;font-size:15px;color:#000">comsol2phreeqc.m</div>
  <svg class="a" style="left:20px;top:251px" width="20" height="21" viewBox="0 0 20 21"><path d="M2.5 0.5h11l5 5v14h-16z" fill="#f6f9fd" stroke="#7d8cc4"/><path d="M13.5 0.5v5h5z" fill="#c8d4f0" stroke="#7d8cc4" stroke-linejoin="round"/><path d="M19.5 6v14.5H3" fill="none" stroke="#9a9a88"/><path d="M6 12h10M6 14.5h10M6 17h10" stroke="#b8bcc8"/><path d="M0 6.5l5-2.5 2.5 3z" fill="#3a9ae0"/><path d="M5 4l5-4 5.5 11.5-4-1.5-3-3.5z" fill="#c04010"/><path d="M10 0l5.5 11.5-4-1.5z" fill="#f59030"/></svg>
  <div class="t" style="left:44px;top:255px;font-size:15px;color:#000">comsol_server_initialization.m</div>
  <svg class="a" style="left:20px;top:273px" width="20" height="21" viewBox="0 0 20 21"><path d="M2.5 0.5h11l5 5v14h-16z" fill="#f6f9fd" stroke="#7d8cc4"/><path d="M13.5 0.5v5h5z" fill="#c8d4f0" stroke="#7d8cc4" stroke-linejoin="round"/><path d="M19.5 6v14.5H3" fill="none" stroke="#9a9a88"/><path d="M6 12h10M6 14.5h10M6 17h10" stroke="#b8bcc8"/><path d="M0 6.5l5-2.5 2.5 3z" fill="#3a9ae0"/><path d="M5 4l5-4 5.5 11.5-4-1.5-3-3.5z" fill="#c04010"/><path d="M10 0l5.5 11.5-4-1.5z" fill="#f59030"/></svg>
  <div class="t" style="left:44px;top:277px;font-size:15px;color:#000">coupling_COMSOL_PHREEQC.m</div>
  <svg class="a" style="left:23px;top:295px" width="13.5" height="20" viewBox="0 0 16 21" preserveAspectRatio="none"><path d="M5.5 1h4v6.5c3 1.5 5 3.5 5 6.5 0 3.5-3 5.5-7 5.5s-7-2-7-5.5c0-3 2-5 5-6.5z" fill="#f6f6f6" stroke="#2a2a2a" stroke-width="1.1"/><path d="M1.6 12.2h11.8c.6.6 1 1.3 1 2.1 0 3-3 4.9-6.9 4.9s-6.9-1.9-6.9-4.9c0-.8.4-1.5 1-2.1z" fill="#0e10d0"/><rect x="5" y="12.5" width="1.4" height="3.5" fill="#40a8f8"/></svg>
  <div class="t" style="left:44px;top:299px;font-size:15px;color:#000">init.phrq</div>
  <div class="a" style="left:0;top:316px;width:415px;height:22px;background:#aaaaaa"></div>
  <svg class="a" style="left:20px;top:317px" width="20" height="21" viewBox="0 0 20 21"><path d="M2.5 0.5h11l5 5v14h-16z" fill="#f6f9fd" stroke="#7d8cc4"/><path d="M13.5 0.5v5h5z" fill="#c8d4f0" stroke="#7d8cc4" stroke-linejoin="round"/><path d="M19.5 6v14.5H3" fill="none" stroke="#9a9a88"/><path d="M6 12h10M6 14.5h10M6 17h10" stroke="#b8bcc8"/><text x="0" y="12" font-family="Liberation Serif" font-style="italic" font-weight="bold" font-size="15" fill="#e8740e">f</text><text x="6" y="11" font-family="Liberation Serif" font-style="italic" font-weight="bold" font-size="11" fill="#e8740e">x</text></svg>
  <div class="t" style="left:44px;top:321px;font-size:15px;color:#000">initial_comsol.m</div>
  <svg class="a" style="left:20px;top:339px" width="20" height="21" viewBox="0 0 20 21"><path d="M2.5 0.5h11l5 5v14h-16z" fill="#f6f9fd" stroke="#7d8cc4"/><path d="M13.5 0.5v5h5z" fill="#c8d4f0" stroke="#7d8cc4" stroke-linejoin="round"/><path d="M19.5 6v14.5H3" fill="none" stroke="#9a9a88"/><path d="M6 12h10M6 14.5h10M6 17h10" stroke="#b8bcc8"/><text x="0" y="12" font-family="Liberation Serif" font-style="italic" font-weight="bold" font-size="15" fill="#e8740e">f</text><text x="6" y="11" font-family="Liberation Serif" font-style="italic" font-weight="bold" font-size="11" fill="#e8740e">x</text></svg>
  <div class="t" style="left:44px;top:343px;font-size:15px;color:#000">initial_phreeqc.m</div>
  <svg class="a" style="left:23px;top:361px" width="13.5" height="20" viewBox="0 0 16 21" preserveAspectRatio="none"><path d="M5.5 1h4v6.5c3 1.5 5 3.5 5 6.5 0 3.5-3 5.5-7 5.5s-7-2-7-5.5c0-3 2-5 5-6.5z" fill="#f6f6f6" stroke="#2a2a2a" stroke-width="1.1"/><path d="M1.6 12.2h11.8c.6.6 1 1.3 1 2.1 0 3-3 4.9-6.9 4.9s-6.9-1.9-6.9-4.9c0-.8.4-1.5 1-2.1z" fill="#0e10d0"/><rect x="5" y="12.5" width="1.4" height="3.5" fill="#40a8f8"/></svg>
  <div class="t" style="left:44px;top:365px;font-size:15px;color:#000">InitialSolutionCondition.phrq</div>
  <svg class="a" style="left:20px;top:383px" width="20" height="21" viewBox="0 0 20 21"><path d="M2.5 0.5h11l5 5v14h-16z" fill="#f6f9fd" stroke="#7d8cc4"/><path d="M13.5 0.5v5h5z" fill="#c8d4f0" stroke="#7d8cc4" stroke-linejoin="round"/><path d="M19.5 6v14.5H3" fill="none" stroke="#9a9a88"/><path d="M6 12h10M6 14.5h10M6 17h10" stroke="#b8bcc8"/><path d="M0 6.5l5-2.5 2.5 3z" fill="#3a9ae0"/><path d="M5 4l5-4 5.5 11.5-4-1.5-3-3.5z" fill="#c04010"/><path d="M10 0l5.5 11.5-4-1.5z" fill="#f59030"/></svg>
  <div class="t" style="left:44px;top:387px;font-size:15px;color:#000">main_v35a.m</div>
  <svg class="a" style="left:20px;top:405px" width="20" height="21" viewBox="0 0 20 21"><path d="M2.5 0.5h11l5 5v14h-16z" fill="#f6f9fd" stroke="#7d8cc4"/><path d="M13.5 0.5v5h5z" fill="#c8d4f0" stroke="#7d8cc4" stroke-linejoin="round"/><path d="M19.5 6v14.5H3" fill="none" stroke="#9a9a88"/><path d="M6 12h10M6 14.5h10M6 17h10" stroke="#b8bcc8"/><text x="0" y="12" font-family="Liberation Serif" font-style="italic" font-weight="bold" font-size="15" fill="#e8740e">f</text><text x="6" y="11" font-family="Liberation Serif" font-style="italic" font-weight="bold" font-size="11" fill="#e8740e">x</text></svg>
  <div class="t" style="left:44px;top:409px;font-size:15px;color:#000">phreeqc2comsol.m</div>
  <svg class="a" style="left:23px;top:427px" width="13.5" height="20" viewBox="0 0 16 21" preserveAspectRatio="none"><path d="M5.5 1h4v6.5c3 1.5 5 3.5 5 6.5 0 3.5-3 5.5-7 5.5s-7-2-7-5.5c0-3 2-5 5-6.5z" fill="#f6f6f6" stroke="#2a2a2a" stroke-width="1.1"/><path d="M1.6 12.2h11.8c.6.6 1 1.3 1 2.1 0 3-3 4.9-6.9 4.9s-6.9-1.9-6.9-4.9c0-.8.4-1.5 1-2.1z" fill="#0e10d0"/><rect x="5" y="12.5" width="1.4" height="3.5" fill="#40a8f8"/></svg>
  <div class="t" style="left:44px;top:431px;font-size:15px;color:#000">ReactionPhreeqc.phrq</div>
  <svg class="a" style="left:20px;top:449px" width="20" height="21" viewBox="0 0 20 21"><path d="M2.5 0.5h11l5 5v14h-16z" fill="#f6f9fd" stroke="#7d8cc4"/><path d="M13.5 0.5v5h5z" fill="#c8d4f0" stroke="#7d8cc4" stroke-linejoin="round"/><path d="M19.5 6v14.5H3" fill="none" stroke="#9a9a88"/><path d="M6 12h10M6 14.5h10M6 17h10" stroke="#b8bcc8"/><path d="M0 6.5l5-2.5 2.5 3z" fill="#3a9ae0"/><path d="M5 4l5-4 5.5 11.5-4-1.5-3-3.5z" fill="#c04010"/><path d="M10 0l5.5 11.5-4-1.5z" fill="#f59030"/></svg>
  <div class="t" style="left:44px;top:453px;font-size:15px;color:#000">Verification 1.m</div>
  <div class="a" style="left:0;top:598px;width:415px;height:1px;background:#777"></div>
  <div class="a" style="left:0;top:599px;width:415px;height:26px;background:linear-gradient(#fff,#f4f4f4);border-bottom:1px solid #c0c0c0"></div>
  <div class="t" style="left:2px;top:605px;font-size:15px;color:#000">initial_comsol.m  (Function)</div>
  <svg class="a" style="left:392px;top:606px" width="12" height="8"><path d="M1 1l5 5 5-5" fill="none" stroke="#555" stroke-width="1.5"/></svg>
  <div class="t" style="left:5px;top:641px;font-size:14.2px">Constants</div>
  <svg class="a" style="left:4px;top:667px" width="20" height="20" viewBox="0 0 20 20"><rect x="5" y="5" width="14" height="14" fill="#e4ecf8" stroke="#a8b8d0"/><rect x="0" y="0" width="15" height="13" rx="6" fill="#3d5a9e"/><text x="4" y="11" font-family="Liberation Serif" font-style="italic" font-weight="bold" font-size="12" fill="#fff">f</text></svg>
  <div class="t" style="left:30px;top:670px;font-size:15px">initial_comsol(my)</div>
</div>
<!-- EDITOR -->
<div class="a" style="left:421px;top:210px;width:1159px;height:459px;border:2px solid #0c3a78;background:#fff;border-top:none">
  <div class="a" style="left:0;top:0;width:1155px;height:25px;background:linear-gradient(#2b5c95,#113f75)"></div>
  <svg class="a" style="left:4px;top:4px" width="18" height="19" viewBox="0 0 18 19"><rect x="0.5" y="2.5" width="15" height="15" fill="#c8d8e8" stroke="#555"/><path d="M3 16l2-5 9-9 3 3-9 9z" fill="#e8a850" stroke="#6a4a20" stroke-width=".7"/><path d="M14 2l3 3 1-1-3-3z" fill="#e05080"/></svg>
  <div class="t" style="left:27px;top:5px;font-size:15px;color:#fff">Editor - C:\Users\SWARNA\Music\IPhreeqc\initial_comsol.m</div>
  <svg class="a" style="left:1114px;top:5px" width="16" height="16" viewBox="0 0 16 16"><circle cx="8" cy="8" r="7" fill="none" stroke="#d8e4f0" stroke-width="1.2"/><path d="M4.5 6h7L8 11z" fill="#fff"/></svg>
  <svg class="a" style="left:1140px;top:8px" width="11" height="11" viewBox="0 0 11 11"><path d="M1 1l9 9M10 1L1 10" stroke="#fff" stroke-width="1.6"/></svg>
  <div class="a" style="left:0;top:25px;width:1155px;height:27px;background:#f0f0f0;border-bottom:1px solid #a0a0a0"></div>
  <div class="a" style="left:4px;top:31px;width:4px;height:15px;background:repeating-linear-gradient(#999 0 1px,transparent 1px 3px)"></div>
  <div class="a" style="left:19px;top:26px;width:271px;height:26px;background:linear-gradient(#e6e6e6,#d8d8d8);border:1px solid #a8a8a8;border-bottom:none;border-radius:7px 7px 0 0"></div>
  <div class="t" style="left:35px;top:31px;font-size:14.8px;color:#333">comsol_server_initialization.mlx *</div>
  <svg class="a" style="left:271px;top:34px" width="11" height="11" viewBox="0 0 11 11"><path d="M1 1l9 9M10 1L1 10" stroke="#b8b8b8" stroke-width="2.2"/></svg>
  <div class="a" style="left:290px;top:26px;width:151px;height:26px;background:linear-gradient(#e6e6e6,#d8d8d8);border:1px solid #a8a8a8;border-bottom:none;border-radius:7px 7px 0 0"></div>
  <div class="t" style="left:301px;top:31px;font-size:14.5px;color:#333">main_v35a.mlx *</div>
  <svg class="a" style="left:425px;top:34px" width="11" height="11" viewBox="0 0 11 11"><path d="M1 1l9 9M10 1L1 10" stroke="#b8b8b8" stroke-width="2.2"/></svg>
  <div class="a" style="left:441px;top:26px;width:158px;height:27px;background:linear-gradient(#ffffff,#fafafa);border:1px solid #a8a8a8;border-bottom:none;border-radius:7px 7px 0 0"></div>
  <div class="t" style="left:456px;top:31px;font-size:15px;color:#333">initial_comsol.m</div>
  <svg class="a" style="left:580px;top:34px" width="11" height="11" viewBox="0 0 11 11"><path d="M1 1l9 9M10 1L1 10" stroke="#b8b8b8" stroke-width="2.2"/></svg>
  <div class="a" style="left:599px;top:26px;width:37px;height:26px;background:linear-gradient(#e6e6e6,#d8d8d8);border:1px solid #a8a8a8;border-bottom:none;border-radius:7px 7px 0 0"></div>
  <svg class="a" style="left:610px;top:33px" width="15" height="13" viewBox="0 0 15 13"><path d="M7.5 0v13M1 6.5h13" stroke="#333" stroke-width="2.5"/></svg>
  <div class="a" style="left:0;top:52px;width:36px;height:405px;background:#f0f0f0"></div>
  <div class="a" style="left:37px;top:52px;width:16px;height:405px;background:#f0f0f0"></div>
  <div class="a" style="left:838px;top:52px;width:1px;height:405px;background:#d0d0d0"></div>
  <div class="a" style="left:70px;top:58px;width:13px;height:13px;border:1px solid #a0a0a0;background:#fff"></div><div class="a" style="left:73px;top:64px;width:7px;height:1px;background:#888"></div>
  <div class="a" style="left:76px;top:71px;width:1px;height:386px;background:#b0b0b0"></div>
  <div class="a" style="left:87px;top:52px;width:1px;height:23px;background:#000"></div>
  <div class="a" style="left:0;top:52px;width:1155px;height:405px;overflow:hidden">
    <div class="t mono" style="left:11px;top:3px;width:22px;text-align:right;font-size:16.67px;line-height:24px">1</div>
    <div class="t mono" style="left:87px;top:3px;font-size:16.67px;line-height:24px"><span style="color:#0000ff">function</span> fem = initial_comsol(my)</div>
    <div class="t mono" style="left:11px;top:27px;width:22px;text-align:right;font-size:16.67px;line-height:24px">2</div>
    <div class="t mono" style="left:87px;top:27px;font-size:16.67px;line-height:24px"></div>
    <div class="t mono" style="left:11px;top:51px;width:22px;text-align:right;font-size:16.67px;line-height:24px">3</div>
    <div class="a" style="left:40px;top:62px;width:9px;height:1px;background:#444"></div>
    <div class="t mono" style="left:87px;top:51px;font-size:16.67px;line-height:24px">flclear <span style="color:#a020f0">fem</span></div>
    <div class="t mono" style="left:11px;top:75px;width:22px;text-align:right;font-size:16.67px;line-height:24px">4</div>
    <div class="t mono" style="left:87px;top:75px;font-size:16.67px;line-height:24px"></div>
    <div class="t mono" style="left:11px;top:99px;width:22px;text-align:right;font-size:16.67px;line-height:24px">5</div>
    <div class="t mono" style="left:87px;top:99px;font-size:16.67px;line-height:24px"><span style="color:#228b22">% Constants</span></div>
    <div class="t mono" style="left:11px;top:123px;width:22px;text-align:right;font-size:16.67px;line-height:24px">6</div>
    <div class="a" style="left:40px;top:134px;width:9px;height:1px;background:#444"></div>
    <div class="t mono" style="left:87px;top:123px;font-size:16.67px;line-height:24px">fem.const = {</div>
    <div class="t mono" style="left:11px;top:147px;width:22px;text-align:right;font-size:16.67px;line-height:24px">7</div>
    <div class="t mono" style="left:87px;top:147px;font-size:16.67px;line-height:24px">    <span style="color:#a020f0">'thetas'</span>,my.thetas, <span style="color:#0000ff">...</span></div>
    <div class="t mono" style="left:11px;top:171px;width:22px;text-align:right;font-size:16.67px;line-height:24px">8</div>
    <div class="t mono" style="left:87px;top:171px;font-size:16.67px;line-height:24px">    <span style="color:#a020f0">'thetar'</span>,my.thetar, <span style="color:#0000ff">...</span></div>
    <div class="t mono" style="left:11px;top:195px;width:22px;text-align:right;font-size:16.67px;line-height:24px">9</div>
    <div class="t mono" style="left:87px;top:195px;font-size:16.67px;line-height:24px">    <span style="color:#a020f0">'alpha'</span>,my.alpha, <span style="color:#0000ff">...</span></div>
    <div class="t mono" style="left:11px;top:219px;width:22px;text-align:right;font-size:16.67px;line-height:24px">10</div>
    <div class="t mono" style="left:87px;top:219px;font-size:16.67px;line-height:24px">    <span style="color:#a020f0">'n'</span>,my.n, <span style="color:#0000ff">...</span></div>
    <div class="t mono" style="left:11px;top:243px;width:22px;text-align:right;font-size:16.67px;line-height:24px">11</div>
    <div class="t mono" style="left:87px;top:243px;font-size:16.67px;line-height:24px">    <span style="color:#a020f0">'l'</span>,my.l, <span style="color:#0000ff">...</span></div>
    <div class="t mono" style="left:11px;top:267px;width:22px;text-align:right;font-size:16.67px;line-height:24px">12</div>
    <div class="t mono" style="left:87px;top:267px;font-size:16.67px;line-height:24px">    <span style="color:#a020f0">'Ks'</span>,my.Ks, <span style="color:#0000ff">...</span></div>
    <div class="t mono" style="left:11px;top:291px;width:22px;text-align:right;font-size:16.67px;line-height:24px">13</div>
    <div class="t mono" style="left:87px;top:291px;font-size:16.67px;line-height:24px">    <span style="color:#a020f0">'S'</span>,my.S, <span style="color:#0000ff">...</span></div>
    <div class="t mono" style="left:11px;top:315px;width:22px;text-align:right;font-size:16.67px;line-height:24px">14</div>
    <div class="t mono" style="left:87px;top:315px;font-size:16.67px;line-height:24px">    <span style="color:#a020f0">'rhof'</span>,my.rhof, <span style="color:#0000ff">...</span></div>
    <div class="t mono" style="left:11px;top:339px;width:22px;text-align:right;font-size:16.67px;line-height:24px">15</div>
    <div class="t mono" style="left:87px;top:339px;font-size:16.67px;line-height:24px">    <span style="color:#a020f0">'tscale'</span>,my.tscale};</div>
    <div class="t mono" style="left:11px;top:363px;width:22px;text-align:right;font-size:16.67px;line-height:24px">16</div>
    <div class="t mono" style="left:87px;top:363px;font-size:16.67px;line-height:24px"></div>
    <div class="t mono" style="left:11px;top:387px;width:22px;text-align:right;font-size:16.67px;line-height:24px">17</div>
    <div class="t mono" style="left:87px;top:387px;font-size:16.67px;line-height:24px"><span style="color:#228b22">% Geometry</span></div>
  </div>
  <div class="a" style="left:1115px;top:52px;width:20px;height:405px;background:#f0f0f0"></div>
  <div class="a" style="left:1115px;top:52px;width:21px;height:7px;background:#5a5a5a"></div>
  <svg class="a" style="left:1119px;top:64px" width="12" height="8"><path d="M1 7l5-5 5 5" fill="none" stroke="#444" stroke-width="2"/></svg>
  <div class="a" style="left:1116px;top:79px;width:19px;height:54px;background:#c8c8c8"></div>
  <svg class="a" style="left:1119px;top:441px" width="12" height="8"><path d="M1 1l5 5 5-5" fill="none" stroke="#444" stroke-width="2"/></svg>
  <div class="a" style="left:1136px;top:52px;width:1px;height:405px;background:#d8d8d8"></div>
  <div class="a" style="left:1137px;top:52px;width:18px;height:405px;background:#f0f0f0"></div>
  <div class="a" style="left:1140px;top:53px;width:14px;height:14px;background:linear-gradient(135deg,#fff6e0,#ffa830);border:1px solid #777"></div>
  <div class="a" style="left:1140px;top:241px;width:14px;height:2px;background:#ff8c00"></div>
  <div class="a" style="left:1140px;top:301px;width:14px;height:2px;background:#ff8c00"></div>
  <div class="a" style="left:1140px;top:376px;width:14px;height:2px;background:#ff8c00"></div>
</div>
<!-- COMMAND WINDOW -->
<div class="a" style="left:422px;top:674px;width:1157px;height:339px;background:#fff;border:1px solid #c0c0c0">
  <div class="a" style="left:0;top:0;width:1155px;height:23px;background:linear-gradient(#fafafa,#e6e6e6);border-bottom:1px solid #a8a8a8"></div>
  <div class="t" style="left:5px;top:3px;font-size:15px;color:#333">Command Window</div>
  <svg class="a" style="left:1135px;top:3px" width="16" height="16" viewBox="0 0 16 16"><circle cx="8" cy="8" r="6.5" fill="none" stroke="#777" stroke-width="1.3"/><path d="M4.5 6h7L8 11z" fill="#555"/></svg>
  <div class="a" style="left:0;top:23px;width:1155px;height:30px;background:#fffde0;border-bottom:1px solid #b8b8b8"></div>
  <div class="t" style="left:9px;top:32px;font-size:14.6px">New to MATLAB? See resources for <span style="color:#0000ee;text-decoration:underline">Getting Started</span>.</div>
  <svg class="a" style="left:1140px;top:30px" width="11" height="11" viewBox="0 0 11 11"><path d="M1 1l9 9M10 1L1 10" stroke="#111" stroke-width="2"/></svg>
  <div class="a" style="left:0;top:54px;width:25px;height:283px;background:#f0f0f0"></div>
  <div class="t mono" style="left:29px;top:59px;font-size:16.67px;line-height:24px">Added directories to the matlab path</div>
  <div class="t mono" style="left:29px;top:83px;font-size:16.67px;line-height:24px">C:\Users\SWARNA\Music\IPhreeqc</div>
  <div class="t mono" style="left:29px;top:107px;font-size:16.67px;line-height:24px">C:\Users\SWARNA\Music\IPhreeqc\example_pesticide\example_pesticide</div>
  <div class="t mono" style="left:29px;top:131px;font-size:16.67px;line-height:24px">&gt;&gt; initial_comsol</div>
  <div class="t mono" style="left:29px;top:155px;font-size:16.67px;line-height:24px"><span style="color:#e00000">Undefined function or variable 'flclear'.</span></div>
  <div class="t mono" style="left:29px;top:179px;font-size:16.67px;line-height:24px"></div>
  <div class="t mono" style="left:29px;top:203px;font-size:16.67px;line-height:24px"><span style="color:#e00000">Error in <b style="text-decoration:underline">initial_comsol</b> (<u>line 3</u>)</span></div>
  <div class="t mono" style="left:29px;top:227px;font-size:16.67px;line-height:24px"><span style="color:#e00000">flclear fem</span></div>
  <div class="t mono" style="left:29px;top:251px;font-size:16.67px;line-height:24px"></div>
  <div class="t mono" style="left:29px;top:275px;font-size:16.67px;line-height:24px">&gt;&gt;</div>
  <div class="t" style="left:4px;top:275px;font-family:'Liberation Serif',serif;font-style:italic;font-weight:bold;font-size:19px;color:#222">fx</div><div class="a" style="left:16px;top:293px;width:0;height:0;border-left:2px solid transparent;border-right:2px solid transparent;border-top:3px solid #222"></div>
</div>
<!-- WORKSPACE -->
<div class="a" style="left:1585px;top:211px;width:335px;height:801px;background:#fff;border-left:1px solid #d0d0d0;border-top:1px solid #c8c8c8;border-bottom:1px solid #a0a0a0">
  <div class="a" style="left:0;top:0;width:334px;height:23px;background:linear-gradient(#fbfbfb,#e4e4e4);border-bottom:1px solid #a8a8a8"></div>
  <div class="t" style="left:5px;top:3px;font-size:15px;color:#333">Workspace</div>
  <svg class="a" style="left:317px;top:4px" width="16" height="16" viewBox="0 0 16 16"><circle cx="8" cy="8" r="6.5" fill="none" stroke="#777" stroke-width="1.3"/><path d="M4.5 6h7L8 11z" fill="#555"/></svg>
  <div class="a" style="left:0;top:23px;width:334px;height:34px;border-bottom:1px solid #e6e6e6;border-left:1px solid #999"></div>
  <div class="a" style="left:1px;top:57px;width:1px;height:744px;background:#999"></div>
  <div class="a" style="left:129px;top:24px;width:1px;height:33px;background:#e0e0e0"></div>
  <div class="a" style="left:259px;top:24px;width:1px;height:33px;background:#e0e0e0"></div>
  <div class="t" style="left:7px;top:34px;font-size:15px">Name</div>
  <svg class="a" style="left:51px;top:39px" width="10" height="6"><path d="M0 6l5-6 5 6z" fill="#a8a898"/></svg>
  <div class="t" style="left:137px;top:34px;font-size:15px">Value</div>
  <svg class="a" style="left:2px;top:58px" width="19" height="19" viewBox="0 0 19 19"><rect x="0.5" y="0.5" width="18" height="18" fill="#fbf4b0" stroke="#8aa0c0"/><path d="M2 9h6M9 4v11M9 4h6M9 9.5h6M9 15h6" stroke="#5a7090" stroke-width="1.2" fill="none"/></svg>
  <div class="t" style="left:24px;top:60px;font-size:15px">my</div>
  <div class="t" style="left:136px;top:61px;font-size:15px;font-style:italic;color:#2a5585">1x1 struct</div>
</div>
<!-- STATUS -->
<div class="a" style="left:0;top:1013px;width:1920px;height:17px;background:#f0f0f0"></div>
<div class="a" style="left:2px;top:1022px;width:16px;height:8px;background:repeating-linear-gradient(90deg,#aaa 0 2px,transparent 2px 4px)"></div>
<div class="a" style="left:30px;top:1018px;width:1px;height:12px;background:#bbb"></div>
<div class="a" style="left:1474px;top:1018px;width:304px;height:12px;border:1px solid #b8b8b8;border-bottom:none;background:#f2f2f2"></div>
<div class="a" style="left:1780px;top:1018px;width:128px;height:12px;border:1px solid #b8b8b8;border-bottom:none;background:#f2f2f2;overflow:hidden"><div class="t" style="left:4px;top:5px;font-size:15px">Ln  1      Col  1</div></div>
<!-- TASKBAR -->
<div class="a" style="left:0;top:1030px;width:1920px;height:50px;background:linear-gradient(90deg,#e8dcdc 0%,#e2dde4 40%,#dfe0ea 70%,#dfe2ec 100%)">
  <div class="a" style="left:0;top:0;width:60px;height:50px;background:#e8dada"></div>
  <svg class="a" style="left:20px;top:15px" width="20" height="20" viewBox="0 0 20 20"><path d="M0 3l8-1v7H0zM9 1.8l11-1.6V9H9zM0 10h8v7l-8-1zM9 10h11v9.8L9 18.2z" fill="#000"/></svg>
  <div class="a" style="left:61px;top:0;width:428px;height:50px;background:#fff;border:1px solid #c8c8c8"></div>
  <svg class="a" style="left:75px;top:14px" width="22" height="22" viewBox="0 0 22 22"><circle cx="13" cy="9" r="7" fill="none" stroke="#111" stroke-width="1.6"/><path d="M8 14l-7 7" stroke="#111" stroke-width="1.8"/></svg>
  <div class="t" style="left:110px;top:15px;font-size:19px;color:#222;letter-spacing:-0.2px">Type here to search</div>
  <svg class="a" style="left:509px;top:15px" width="22" height="22" viewBox="0 0 22 22"><circle cx="11" cy="11" r="8.5" fill="none" stroke="#000" stroke-width="2.6"/></svg>
  <svg class="a" style="left:569px;top:14px" width="23" height="22" viewBox="0 0 23 22"><path d="M1 1h16M1 21h16M3 5h12v12H3z" fill="none" stroke="#000" stroke-width="1.6"/><path d="M21 1v5M21 9v4M21 16v5" stroke="#000" stroke-width="2"/></svg>
  <svg class="a" style="left:630px;top:13px" width="28" height="24" viewBox="0 0 28 24"><path d="M0.5 0.5h12l2 2.5H0.5z" fill="#e0a000"/><rect x="0.5" y="2.5" width="27" height="20" rx="1" fill="#ffd35a"/><path d="M5 23v-10h17v10h-4.5v-6h-8v6z" fill="#3a9ae8"/></svg>
  <svg class="a" style="left:691px;top:10px" width="28" height="28" viewBox="0 0 28 28"><path d="M14 14L1.88 7A14 14 0 0 1 26.12 7z" fill="#db4437"/><path d="M14 14L26.12 7A14 14 0 0 1 14 28z" fill="#fcc934"/><path d="M14 14L14 28A14 14 0 0 1 1.88 7z" fill="#1e9e58"/><circle cx="14" cy="14" r="6.4" fill="#fff"/><circle cx="14" cy="14" r="5.1" fill="#4a8af4"/></svg>
  <svg class="a" style="left:753px;top:10px" width="30" height="30" viewBox="0 0 30 30"><circle cx="15" cy="15" r="15" fill="#0a28e0"/><path d="M15 4c-2 4-3 5-3 7a3 3 0 0 0 6 0c0-2-1-3-3-7z" fill="#fff"/><path d="M3 17c4-2 7 2 12 0s8-2 12 0M4 21c4-2 7 2 11 0s7-2 11 0" fill="none" stroke="#fff" stroke-width="2"/></svg>
  <div class="a" style="left:800px;top:0;width:61px;height:50px;background:#f2f0f6"></div>
  <svg class="a" style="left:815px;top:11px" width="30" height="27" viewBox="0 0 30 27" preserveAspectRatio="none"><defs><linearGradient id="mlg1" x1="0" y1="0" x2="1" y2="0"><stop offset="0" stop-color="#6a0c0c"/><stop offset=".35" stop-color="#b8301a"/><stop offset=".6" stop-color="#f08a30"/><stop offset=".75" stop-color="#f0a030"/><stop offset="1" stop-color="#c82a1a"/></linearGradient></defs><path d="M0 15.4L9 9.5 15.5 6 19.8 0.5 13 13 6.5 19.5z" fill="#4a9ed8"/><path d="M19.8 0.3C22 6 26 18 29.6 22.6 27 20 25 18 23 18.5 19 19.5 16 26.7 12 26.7L9 18z" fill="url(#mlg1)"/></svg>
  <svg class="a" style="left:877px;top:13px" width="28" height="24" viewBox="0 0 28 24"><rect x="0.5" y="0.5" width="27" height="23" fill="#000" stroke="#888"/><rect x="1" y="1" width="26" height="2" fill="#bbb"/><path d="M4 7h4M10 8h8" stroke="#ccc" stroke-width="1"/></svg>
  <div class="a" style="left:619px;top:46px;width:51px;height:4px;background:#7a50b0"></div>
  <div class="a" style="left:681px;top:46px;width:51px;height:4px;background:#7a50b0"></div>
  <div class="a" style="left:743px;top:46px;width:51px;height:4px;background:#7a50b0"></div>
  <div class="a" style="left:800px;top:46px;width:61px;height:4px;background:#7a50b0"></div>
  <div class="a" style="left:867px;top:46px;width:51px;height:4px;background:#7a50b0"></div>
  <svg class="a" style="left:1286px;top:13px" width="25" height="25" viewBox="0 0 25 25"><circle cx="12.5" cy="12.5" r="12" fill="#1a8ae0"/><circle cx="12.5" cy="12.5" r="10" fill="none" stroke="#fff" stroke-width="1.5"/><text x="7.5" y="19" font-family="Liberation Sans" font-weight="bold" font-size="16" fill="#fff">?</text></svg>
  <svg class="a" style="left:1393px;top:13px" width="26" height="22" viewBox="0 0 26 22"><ellipse cx="15" cy="9" rx="9" ry="7" fill="#b8d8f0"/><ellipse cx="8" cy="12" rx="7" ry="5" fill="#d8ecf8"/><path d="M8 16l-2 4M13 16l-2 4" stroke="#4aa8e8" stroke-width="2"/></svg>
  <div class="t" style="left:1430px;top:17px;font-size:19px;color:#111;letter-spacing:-0.3px">29°C  Light rain</div>
  <svg class="a" style="left:1573px;top:19px" width="18" height="10"><path d="M1 9l8-8 8 8" fill="none" stroke="#111" stroke-width="1.5"/></svg>
  <svg class="a" style="left:1603px;top:14px" width="110" height="22" viewBox="0 0 110 22"><rect x="1" y="5" width="10" height="12" rx="2" fill="none" stroke="#111" stroke-width="1.2"/><path d="M11 9l5-3v10l-5-3" fill="none" stroke="#111" stroke-width="1.2"/><rect x="31" y="8" width="14" height="8" fill="none" stroke="#111" stroke-width="1.2"/><rect x="33" y="10" width="6" height="4" fill="#111"/><path d="M29 5v6" stroke="#111" stroke-width="1.5"/><rect x="60" y="4" width="19" height="12" fill="none" stroke="#111" stroke-width="1.2"/><path d="M66 19h7M69 16v3" stroke="#111" stroke-width="1.2"/><path d="M90 8h4l5-4v14l-5-4h-4z" fill="none" stroke="#111" stroke-width="1.2"/><path d="M102 7c2 2 2 6 0 8M105 5c3 3 3 9 0 12" fill="none" stroke="#111" stroke-width="1.2"/></svg>
  <div class="t" style="left:1725px;top:18px;font-size:15px;color:#111">ENG</div>
  <div class="t" style="left:1778px;top:6px;font-size:15px;color:#111">06:45 PM</div>
  <div class="t" style="left:1770px;top:29px;font-size:15px;color:#111">17-09-2021</div>
  <div class="a" style="left:1915px;top:2px;width:1px;height:48px;background:#b8b8c0"></div>
  <svg class="a" style="left:1868px;top:15px" width="23" height="22" viewBox="0 0 23 22"><path d="M1 1h21v15H8l-4 5v-5H1z" fill="none" stroke="#111" stroke-width="1.5"/></svg>
</div>
</body></html>
